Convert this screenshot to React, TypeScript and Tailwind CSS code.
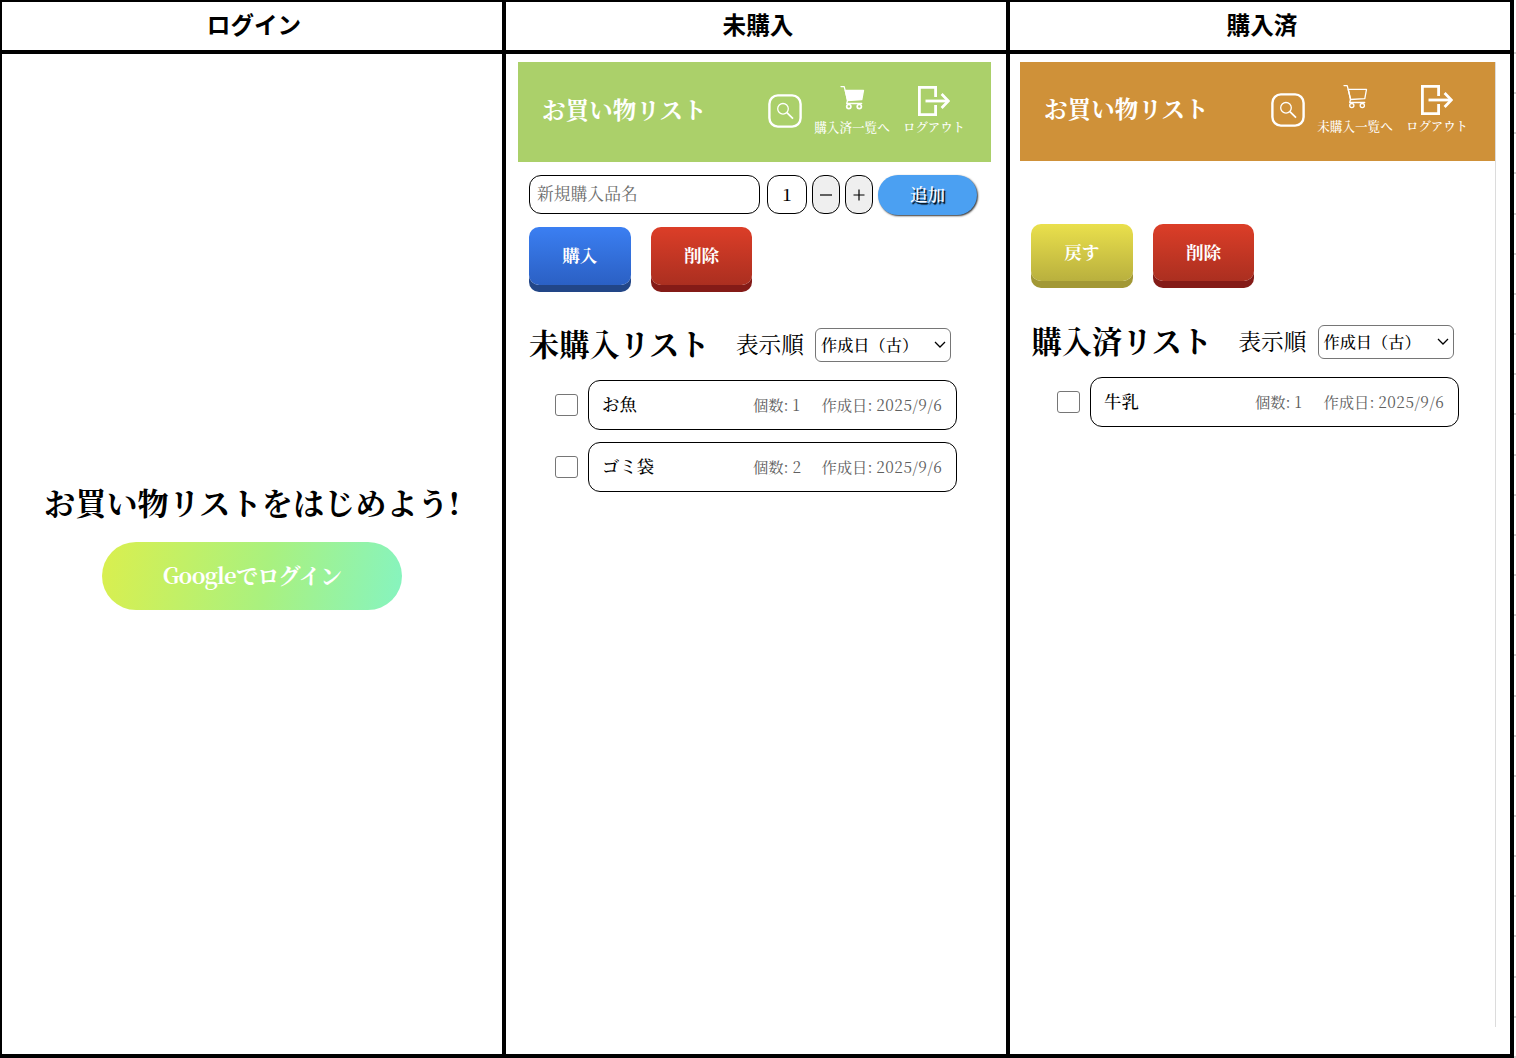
import React from 'react';

const SERIF = "font-['Noto_Serif_CJK_JP','Noto_Serif_JP','Liberation_Serif','Noto_Sans_CJK_JP',serif]";

function SearchIcon() {
  return (
    <svg viewBox="0 0 34 34" className="h-[34px] w-[34px] shrink-0" fill="none" stroke="white">
      <rect x="1.4" y="1.4" width="31.2" height="31.2" rx="8.5" strokeWidth="2.4" />
      <circle cx="15" cy="14.8" r="5.3" strokeWidth="1.3" />
      <path d="M18.9 18.7L25 24.7" strokeWidth="1.7" />
    </svg>
  );
}

function CartIcon({ filled }: { filled?: boolean }) {
  return (
    <svg viewBox="0 0 25 25" className="h-[25px] w-[25px]" fill="none" stroke="white" strokeWidth="1.3" strokeLinecap="round" strokeLinejoin="round">
      <path d="M1 1.6h3.2l3.4 13.6-.9 3.3h15" />
      <path d="M5.3 5.3h18.2l-1.7 9.4-14.3.8z" fill={filled ? 'white' : 'none'} />
      <circle cx="8.8" cy="21.6" r="2.1" strokeWidth={filled ? 1.7 : 1.3} />
      <circle cx="19.3" cy="21.6" r="2.1" strokeWidth={filled ? 1.7 : 1.3} />
    </svg>
  );
}

function LogoutIcon() {
  return (
    <svg viewBox="0 0 32 30" className="h-[30px] w-8" fill="none" stroke="white" strokeWidth="2.8">
      <path d="M17.6 11V1.4H1.4v27.2h16.2V19" />
      <path d="M7.5 15H29.5" />
      <path d="M23.6 8l6.8 7-6.8 7" />
    </svg>
  );
}

type HeaderProps = { color: string; link: string; titleWidth: string; filled?: boolean };

function AppHeader({ color, link, titleWidth, filled }: HeaderProps) {
  return (
    <header className={`flex shrink-0 text-white ${color}`}>
      <h1 className={`ml-6 mt-[29px] ${titleWidth} whitespace-nowrap text-[23.6px] leading-9 font-bold`}>お買い物リスト</h1>
      <div className="mt-8">
        <SearchIcon />
      </div>
      <div className="ml-3 mt-[23px] flex w-[76px] flex-col items-center">
        <CartIcon filled={filled} />
        <span className="mt-2 whitespace-nowrap text-[12.6px] leading-[18px] font-medium">{link}</span>
      </div>
      <div className="ml-[13px] mt-6 flex w-[62px] flex-col items-center">
        <LogoutIcon />
        <span className="mt-[2px] whitespace-nowrap text-[12.4px] leading-[18px] font-medium">ログアウト</span>
      </div>
    </header>
  );
}

function PushButton({ label, color }: { label: string; color: string }) {
  return (
    <button className={`h-[57.5px] w-[101.7px] rounded-[10px] pb-px text-[17.6px] font-bold text-white ${color}`}>{label}</button>
  );
}

const RED = 'bg-linear-to-b from-[#dc3e28] to-[#ab2f20] shadow-[0_7px_0_#841b17]';

function ListHeading({ title }: { title: string }) {
  return (
    <div className="flex h-[34px] items-center">
      <h2 className="w-[207px] whitespace-nowrap pb-1 text-[30.2px] leading-[34px] font-bold">{title}</h2>
      <span className="w-[79px] whitespace-nowrap pb-1 text-[22.6px] leading-[34px]">表示順</span>
      <div className="flex h-[34px] w-[136px] items-center justify-between rounded-md border-[1.3px] border-[#767676] pr-1 pl-[5px] text-[16.2px]">
        <span className="whitespace-nowrap pb-0.5 font-medium">作成日（古）</span>
        <svg viewBox="0 0 12 8" className="h-2 w-3" fill="none" stroke="black" strokeWidth="1.3">
          <path d="M1 1l5 5 5-5" />
        </svg>
      </div>
    </div>
  );
}

function ItemRow({ name, count }: { name: string; count: number }) {
  return (
    <div className="flex items-center">
      <div className="h-[22.5px] w-[22.5px] rounded-[3px] border border-[#767676]" />
      <div className="ml-[10.5px] flex h-[50px] w-[368.5px] items-center rounded-xl border-[1.4px] border-black pr-[13px] pl-[13px]">
        <span className="grow pb-px text-[17.4px] font-medium">{name}</span>
        <span className="w-[68.5px] whitespace-nowrap pb-0.5 text-[15.3px] text-[#606060]">
          個数: <span className="tracking-[0.4px]">{count}</span>
        </span>
        <span className="w-[121px] whitespace-nowrap pb-0.5 text-[15.3px] text-[#606060]">
          作成日: <span className="tracking-[0.5px]">2025/9/6</span>
        </span>
      </div>
    </div>
  );
}

function ColumnTitle({ children }: { children: React.ReactNode }) {
  return (
    <div className="flex h-[52px] items-center justify-center border-b-4 border-black pb-[3px] pl-1 font-['Noto_Sans_CJK_JP',sans-serif] text-[23.6px] font-bold">
      {children}
    </div>
  );
}

export default function App() {
  return (
    <div className={`flex h-[1058px] w-[1516px] bg-white text-black ${SERIF}`}>
      <div className="flex w-[1514px] border-t-2 border-r-4 border-b-4 border-l-2 border-black">
        <section className="w-[504px] border-r-4 border-black">
          <ColumnTitle>ログイン</ColumnTitle>
          <div className="flex flex-col items-center pt-[426px]">
            <h1 className="whitespace-nowrap text-[31.2px] leading-[44px] font-bold">お買い物リストをはじめよう!</h1>
            <button className="mt-[18px] h-[68px] w-[300px] rounded-full bg-[linear-gradient(100deg,#daef4e,#a9f17f_55%,#86f4c0)] pb-[3px] text-[22px] font-bold tracking-[-0.7px] text-white">
              Googleでログイン
            </button>
          </div>
        </section>

        <section className="w-[504px] border-r-4 border-black">
          <ColumnTitle>未購入</ColumnTitle>
          <div className="ml-3 w-[473px] pt-2">
            <div className="flex h-[100px] flex-col bg-[#abd06a]">
              <AppHeader color="bg-[#abd06a]" link="購入済一覧へ" titleWidth="w-[226px]" filled />
            </div>
            <div className="ml-[11px] flex pt-[13px]">
              <div className="flex h-[39px] w-[231px] items-center rounded-xl border-[1.4px] border-black pb-px pl-[7px] text-[16.8px] text-[#6c6c6c]">
                新規購入品名
              </div>
              <div className="ml-[7px] flex h-[39px] w-10 items-center justify-center rounded-xl border-[1.4px] border-black pb-0.5 text-[17px] font-medium">1</div>
              <div className="ml-[5px] flex h-[39px] w-7 items-center justify-center rounded-xl border-[1.4px] border-black bg-[#efefef]">
                <svg viewBox="0 0 12 12" className="h-3 w-3" stroke="black" strokeWidth="1.2"><path d="M0 6h12" /></svg>
              </div>
              <div className="ml-[5px] flex h-[39px] w-7 items-center justify-center rounded-xl border-[1.4px] border-black bg-[#efefef]">
                <svg viewBox="0 0 12 12" className="h-3 w-3" stroke="black" strokeWidth="1.2"><path d="M.5 6h11M6 .5v11" /></svg>
              </div>
              <div className="ml-[5px] flex h-10 w-[99px] items-center justify-center rounded-full bg-[#4ba0f2] pb-px text-[17.6px] font-medium text-white shadow-[1px_1px_2px_#333] [text-shadow:1.5px_1.5px_1px_#000]">追加</div>
            </div>
            <div className="mt-3 ml-[11px] flex gap-5">
              <PushButton label="購入" color="bg-linear-to-b from-[#3b7ff2] to-[#2b60c4] shadow-[0_7px_0_#224687]" />
              <PushButton label="削除" color={RED} />
            </div>
            <div className="mt-[43.5px] ml-[11px]">
              <ListHeading title="未購入リスト" />
            </div>
            <div className="mt-[18px] ml-[37px] flex flex-col gap-3">
              <ItemRow name="お魚" count={1} />
              <ItemRow name="ゴミ袋" count={2} />
            </div>
          </div>
        </section>

        <section className="w-[500px]">
          <ColumnTitle>購入済</ColumnTitle>
          <div className="mt-2 ml-[10px] h-[965px] w-[476px] border-r border-[#dcdcdc]">
            <div className="flex h-[99px] flex-col bg-[#cf9139]">
              <div className="-mt-px">
                <AppHeader color="bg-transparent" link="未購入一覧へ" titleWidth="w-[227px]" />
              </div>
            </div>
            <div className="mt-[62.5px] ml-[11px] flex gap-5">
              <PushButton label="戻す" color="bg-linear-to-b from-[#eae04c] to-[#b9b03e] shadow-[0_7px_0_#a29835]" />
              <PushButton label="削除" color={RED} />
            </div>
            <div className="mt-11 ml-[11.5px]">
              <ListHeading title="購入済リスト" />
            </div>
            <div className="mt-[18px] ml-[37px]">
              <ItemRow name="牛乳" count={1} />
            </div>
          </div>
        </section>
      </div>
      <div className="flex w-[2px] flex-col justify-between pt-[52px]">
        {Array.from({ length: 26 }, (_, i) => (
          <div key={i} className="h-[2px] bg-[#d4d4d4]" />
        ))}
      </div>
    </div>
  );
}
